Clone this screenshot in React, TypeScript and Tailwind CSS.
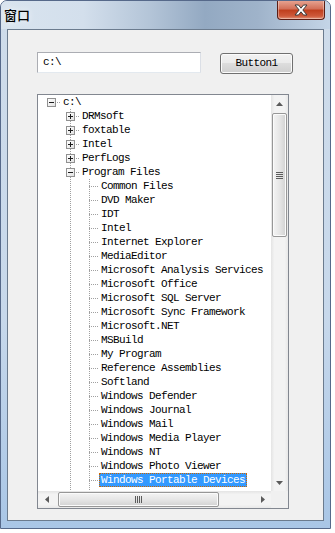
import React from "react";

type Row = { level: number; label: string; box?: "plus" | "minus"; selected?: boolean };

const rows: Row[] = [
  { level: 0, label: "c:\\", box: "minus" },
  { level: 1, label: "DRMsoft", box: "plus" },
  { level: 1, label: "foxtable", box: "plus" },
  { level: 1, label: "Intel", box: "plus" },
  { level: 1, label: "PerfLogs", box: "plus" },
  { level: 1, label: "Program Files", box: "minus" },
  { level: 2, label: "Common Files" },
  { level: 2, label: "DVD Maker" },
  { level: 2, label: "IDT" },
  { level: 2, label: "Intel" },
  { level: 2, label: "Internet Explorer" },
  { level: 2, label: "MediaEditor" },
  { level: 2, label: "Microsoft Analysis Services" },
  { level: 2, label: "Microsoft Office" },
  { level: 2, label: "Microsoft SQL Server" },
  { level: 2, label: "Microsoft Sync Framework" },
  { level: 2, label: "Microsoft.NET" },
  { level: 2, label: "MSBuild" },
  { level: 2, label: "My Program" },
  { level: 2, label: "Reference Assemblies" },
  { level: 2, label: "Softland" },
  { level: 2, label: "Windows Defender" },
  { level: 2, label: "Windows Journal" },
  { level: 2, label: "Windows Mail" },
  { level: 2, label: "Windows Media Player" },
  { level: 2, label: "Windows NT" },
  { level: 2, label: "Windows Photo Viewer" },
  { level: 2, label: "Windows Portable Devices", selected: true },
  // next item is scrolled out of view, only its tree lines peek in
  { level: 2, label: "" },
];

const mono = "[font-family:'Liberation_Mono',monospace] text-[11px] tracking-[-0.6px]";

function ExpandBox({ type }: { type: "plus" | "minus" }) {
  return (
    <div className="absolute left-[5px] top-[3px] w-[9px] h-[9px] border border-[#919191] bg-[linear-gradient(135deg,#ffffff,#e2e2e2)]">
      <div className="absolute left-[1px] top-[3px] w-[5px] h-px bg-[#1c1c1c]" />
      {type === "plus" && <div className="absolute left-[3px] top-[1px] w-px h-[5px] bg-[#1c1c1c]" />}
    </div>
  );
}

function TreeRow({ row }: { row: Row }) {
  const cells = [];
  for (let i = 0; i <= row.level; i++) {
    const branch = i === row.level;
    cells.push(
      <div key={i} className="relative w-[19px] h-[14px] shrink-0">
        {i >= 1 && (
          <div className="absolute left-[9px] top-0 w-px h-[14px] bg-[repeating-linear-gradient(to_bottom,#a0a0a0_0px,#a0a0a0_1px,transparent_1px,transparent_2px)]" />
        )}
        {branch && (
          <div className="absolute left-[9px] top-[7px] w-[10px] h-px bg-[repeating-linear-gradient(to_right,#a0a0a0_0px,#a0a0a0_1px,transparent_1px,transparent_2px)]" />
        )}
        {branch && row.box && <ExpandBox type={row.box} />}
      </div>
    );
  }
  return (
    <div className="flex h-[14px] pl-[4px]">
      {cells}
      <span
        className={
          "h-[14px] leading-[14px] px-[2px] whitespace-nowrap " +
          (row.selected
            ? "bg-[#3399ff] text-white outline-1 outline-dotted outline-[#cc6600] -outline-offset-1"
            : "text-black")
        }
      >
        {row.label}
      </span>
    </div>
  );
}

function ArrowV({ up }: { up: boolean }) {
  return (
    <div className="h-[17px] flex items-center justify-center">
      <svg width="7" height="4" viewBox="0 0 7 4">
        <path d={up ? "M0 4L3.5 0L7 4Z" : "M0 0L3.5 4L7 0Z"} fill="#5a5a5a" />
      </svg>
    </div>
  );
}

function ArrowH({ left }: { left: boolean }) {
  return (
    <div className="w-[17px] flex items-center justify-center">
      <svg width="4" height="7" viewBox="0 0 4 7">
        <path d={left ? "M4 0L0 3.5L4 7Z" : "M0 0L4 3.5L0 7Z"} fill="#5a5a5a" />
      </svg>
    </div>
  );
}

export default function App() {
  return (
    <div className="w-[335px] h-[533px] bg-white">
      <div className="w-[331px] h-[529px] border border-[#56698a] rounded-t-[7px] bg-[linear-gradient(to_bottom,#cfdcea_0%,#c7d8eb_60%,#a9c6e6_100%)] flex flex-col overflow-hidden">
        <div className="h-[28px] flex items-start justify-between bg-[linear-gradient(90deg,#d9e4ef_0%,#d3dfec_25%,#b4c5d8_45%,#93a9c2_62%,#9fb3ca_78%,#c4d5e7_100%)]">
          <div className="pl-[3px] pt-[6px] text-[13px] leading-[16px] font-medium text-black [font-family:'Noto_Sans_CJK_SC',sans-serif] [text-shadow:0_0_6px_#ffffff]">
            窗口
          </div>
          <div className="mr-[5px] -mt-px w-[48px] h-[20px] rounded-b-[4px] border border-[#5b1d14] border-t-0 bg-[linear-gradient(to_bottom,#e9a896_0%,#d3715a_45%,#c0401f_55%,#cf5a3b_85%,#e2957b_100%)] shadow-[inset_0_0_0_1px_rgba(255,255,255,0.35)] flex items-center justify-center">
            <svg width="16" height="12" viewBox="0 0 16 12">
              <path
                d="M2 1h3.5L8 4.2 10.5 1H14L9.8 6 14 11h-3.5L8 7.8 5.5 11H2l4.2-5z"
                fill="#ffffff"
                stroke="#3b3b3b"
                strokeWidth="1"
              />
            </svg>
          </div>
        </div>

        <div className="ml-[6px] w-[317px] h-[492px] border border-[#6b7b8e] bg-[#f0f0f0] pl-[29px] pt-[22px]">
          <div className="flex items-start">
            <div className={"w-[164px] h-[21px] bg-white border border-[#abadb3] border-r-[#dbdfe6] border-b-[#e3e9ef] pl-[5px] leading-[19px] text-black " + mono}>
              c:\
            </div>
            <div className={"ml-[19px] mt-px w-[73px] h-[21px] rounded-[3px] border border-[#707070] bg-[linear-gradient(to_bottom,#f2f2f2_0%,#ebebeb_45%,#dddddd_50%,#cfcfcf_100%)] shadow-[inset_0_0_0_1px_#fbfbfb] flex items-center justify-center text-black " + mono}>
              Button1
            </div>
          </div>

          <div className="mt-[20px] w-[252px] h-[415px] border border-[#828790] bg-white grid grid-cols-[233px_17px] grid-rows-[396px_17px]">
            <div className={"overflow-hidden " + mono}>
              {rows.map((r, i) => (
                <TreeRow key={i} row={r} />
              ))}
            </div>

            <div className="flex flex-col bg-[linear-gradient(90deg,#e4e4e4,#f3f3f3_20%,#f3f3f3_80%,#e8e8e8)]">
              <ArrowV up />
              <div className="mt-px mx-px h-[124px] rounded-[2px] border border-[#979797] bg-[linear-gradient(90deg,#f4f4f4,#e6e6e6_50%,#d2d2d2)] shadow-[inset_0_0_0_1px_#fbfbfb] flex flex-col items-center justify-center gap-px">
                <div className="w-[7px] h-px bg-[#5c5c5c]" />
                <div className="w-[7px] h-px bg-[#5c5c5c]" />
                <div className="w-[7px] h-px bg-[#5c5c5c]" />
                <div className="w-[7px] h-px bg-[#5c5c5c]" />
              </div>
              <div className="flex-1" />
              <ArrowV up={false} />
            </div>

            <div className="flex bg-[linear-gradient(to_bottom,#e4e4e4,#f3f3f3_20%,#f3f3f3_80%,#e8e8e8)]">
              <ArrowH left />
              <div className="ml-[3px] my-px w-[161px] rounded-[2px] border border-[#979797] bg-[linear-gradient(to_bottom,#f4f4f4,#e6e6e6_50%,#d2d2d2)] shadow-[inset_0_0_0_1px_#fbfbfb] flex items-center justify-center gap-px">
                <div className="w-px h-[7px] bg-[#5c5c5c]" />
                <div className="w-px h-[7px] bg-[#5c5c5c]" />
                <div className="w-px h-[7px] bg-[#5c5c5c]" />
                <div className="w-px h-[7px] bg-[#5c5c5c]" />
              </div>
              <div className="flex-1" />
              <ArrowH left={false} />
            </div>

            <div className="bg-[#f0f0f0]" />
          </div>
        </div>
      </div>
    </div>
  );
}
